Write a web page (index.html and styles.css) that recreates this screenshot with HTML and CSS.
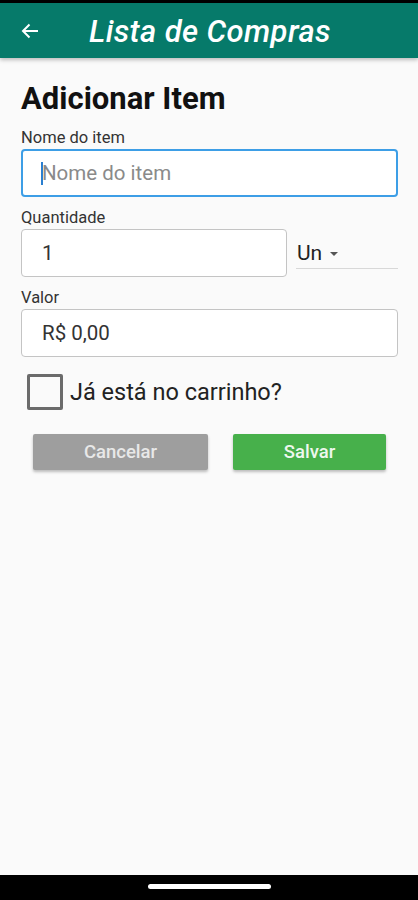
FILE: index.html
```html
<!DOCTYPE html>
<html lang="pt-BR">
<head>
    <meta charset="UTF-8">
    <meta name="viewport" content="width=device-width, initial-scale=1.0">
    <title>Lista de Compras</title>
    <link rel="stylesheet" href="styles.css">
</head>
<body>
    <div class="status-bar"></div>
    <header class="app-bar">
        <button class="back-btn" aria-label="Voltar">
            <svg width="18" height="16" viewBox="0 0 18 16">
                <path d="M17 8H2M8.5 1.5L2 8l6.5 6.5" fill="none" stroke="#fff" stroke-width="2"/>
            </svg>
        </button>
        <h1>Lista de Compras</h1>
    </header>

    <main class="content">
        <h2>Adicionar Item</h2>

        <label class="field-label">Nome do item</label>
        <div class="input focused">
            <span class="caret"></span>
            <span class="placeholder">Nome do item</span>
        </div>

        <label class="field-label">Quantidade</label>
        <div class="qty-row">
            <div class="input qty"><span class="value">1</span></div>
            <div class="unit-select">
                <span>Un</span>
                <span class="arrow"></span>
            </div>
        </div>

        <label class="field-label">Valor</label>
        <div class="input"><span class="value">R$ 0,00</span></div>

        <div class="check-row">
            <span class="checkbox"></span>
            <span class="check-text">Já está no carrinho?</span>
        </div>

        <div class="actions">
            <button class="btn btn-cancel">Cancelar</button>
            <button class="btn btn-save">Salvar</button>
        </div>
    </main>

    <div class="nav-bar"><span class="home-pill"></span></div>
</body>
</html>
```

FILE: styles.css
```css
body {
    margin: 0;
    height: 900px;
    display: flex;
    flex-direction: column;
    font-family: Roboto, "Noto Sans", sans-serif;
    background-color: #fafafa;
    color: #222;
}
.status-bar {
    height: 3px;
    background-color: #000;
}
.app-bar {
    height: 55px;
    display: flex;
    align-items: center;
    background-color: #067a6a;
    box-shadow: 0 2px 4px rgba(0, 0, 0, 0.25);
    position: relative;
    z-index: 1;
}
.back-btn {
    background: none;
    border: none;
    padding: 0;
    margin-left: 21px;
    width: 18px;
    height: 16px;
    display: flex;
}
.app-bar h1 {
    margin: 2px 0 0 50px;
    color: #fff;
    font-size: 31px;
    font-style: italic;
    font-weight: 500;
    letter-spacing: 0.4px;
}
.content {
    flex: 1;
    padding: 22px 20px 0 21px;
}
.content h2 {
    margin: 0 0 10px;
    font-size: 31px;
    font-weight: 700;
    line-height: 38px;
    color: #111;
}
.field-label {
    display: block;
    font-size: 16.5px;
    line-height: 20px;
    color: #333;
    margin-bottom: 1px;
}
.input {
    box-sizing: border-box;
    height: 48px;
    border: 1px solid #c4c4c4;
    border-radius: 4px;
    background-color: #fff;
    display: flex;
    align-items: center;
    padding-left: 20px;
    font-size: 20.5px;
    margin-bottom: 11px;
}
.input.focused {
    border: 2px solid #3d9ee6;
    padding-left: 18px;
}
.caret {
    width: 2px;
    height: 23px;
    background-color: #2a7fd0;
    margin-right: -1px;
}
.placeholder {
    color: #8a8a8a;
}
.value {
    color: #333;
}
.qty-row {
    display: flex;
    gap: 9px;
}
.input.qty {
    width: 266px;
}
.unit-select {
    flex: 1;
    height: 40px;
    box-sizing: border-box;
    border-bottom: 1px solid #d8d8d8;
    display: flex;
    align-items: center;
    padding: 8px 0 0 1px;
    gap: 8px;
    font-size: 21px;
    color: #222;
}
.arrow {
    width: 0;
    height: 0;
    border-left: 4px solid transparent;
    border-right: 4px solid transparent;
    border-top: 4px solid #555;
    margin-top: 2px;
}
.check-row {
    display: flex;
    align-items: center;
    margin: 17px 0 0 6px;
    gap: 7px;
}
.checkbox {
    box-sizing: border-box;
    width: 36px;
    height: 36px;
    border: 3px solid #6b6b6b;
    border-radius: 2px;
}
.check-text {
    font-size: 23.5px;
    color: #222;
}
.actions {
    display: flex;
    margin: 24px 0 0 12px;
}
.btn {
    height: 36px;
    border: none;
    border-radius: 2px;
    font-family: Roboto, "Noto Sans", sans-serif;
    font-size: 18.5px;
    font-weight: 500;
    box-shadow: 0 2px 3px rgba(0, 0, 0, 0.25);
}
.btn-cancel {
    width: 175px;
    background-color: #9e9e9e;
    color: #e8e8e8;
}
.btn-save {
    width: 153px;
    margin-left: 25px;
    background-color: #47b04b;
    color: #eef7ee;
}
.nav-bar {
    height: 25px;
    background-color: #000;
    display: flex;
    justify-content: center;
    padding-top: 9px;
    box-sizing: border-box;
}
.home-pill {
    width: 123px;
    height: 5px;
    border-radius: 3px;
    background-color: #fff;
}
```
